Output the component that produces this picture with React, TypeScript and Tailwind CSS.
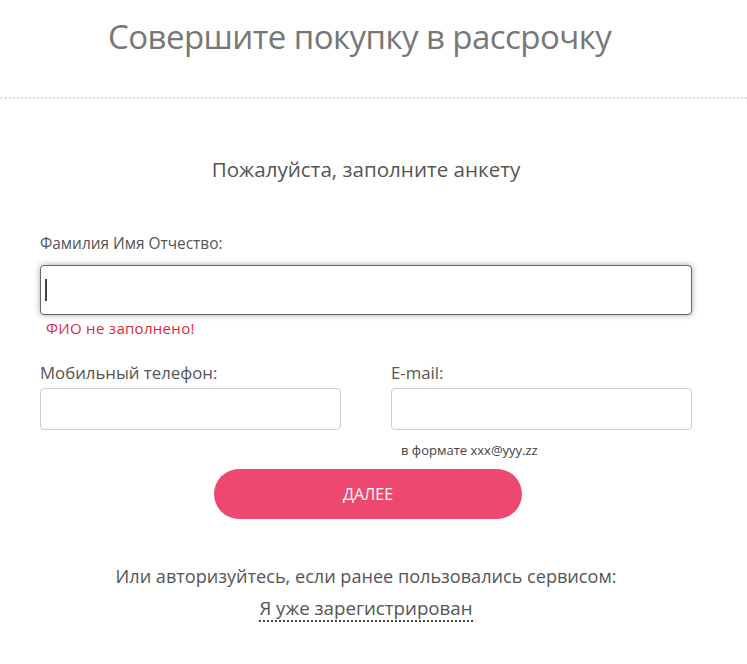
import React from "react";

export default function App() {
  return (
    <div className="min-h-[664px] w-[747px] bg-white font-['Open_Sans',sans-serif] text-[#555]">
      <div className="h-[97px] pt-[12px]">
        <h1 className="ml-[108px] text-[33px] leading-[50px] font-normal text-[#777] tracking-[-0.55px]">
          Совершите покупку в рассрочку
        </h1>
      </div>
      <div className="border-t-2 border-dotted border-[#ddd]" />
      <div className="ml-[40px] w-[652px]">
        <p className="mt-[56px] text-center text-[20.6px] leading-[28px] text-[#555]">Пожалуйста, заполните анкету</p>
        <label className="mt-[51px] block text-[15.4px] leading-[20px] text-[#555]">Фамилия Имя Отчество:</label>
        <div className="mt-[11px] h-[50px] rounded-[4px] border border-[#666] bg-white shadow-[0_0_6px_rgba(0,0,0,0.35)] flex items-center pl-[4px]">
          <div className="h-[22px] w-[2px] bg-[#444]" />
        </div>
        <p className="mt-[4px] ml-[6px] text-[15px] leading-[18px] tracking-[0.3px] text-[#e3283e]">ФИО не заполнено!</p>
        <div className="mt-[26px] flex gap-[50px]">
          <div className="w-[301px]">
            <label className="block text-[16.8px] leading-[20px] text-[#555]">Мобильный телефон:</label>
            <div className="mt-[5px] h-[42px] rounded-[4px] border border-[#ccc] bg-white" />
          </div>
          <div className="w-[301px]">
            <label className="block text-[16.8px] leading-[20px] text-[#555]">E-mail:</label>
            <div className="mt-[5px] h-[42px] rounded-[4px] border border-[#ccc] bg-white" />
            <p className="mt-[12px] ml-[10px] text-[13px] leading-[16px] text-[#444]">в формате xxx@yyy.zz</p>
          </div>
        </div>
        <div className="mt-[11px] flex justify-center">
          <button className="ml-[4px] h-[50px] w-[308px] rounded-full bg-[#ef4870] text-[16px] text-white">ДАЛЕЕ</button>
        </div>
        <p className="mt-[45px] text-center text-[18.1px] leading-[24px] text-[#555]">
          Или авторизуйтесь, если ранее пользовались сервисом:
        </p>
        <div className="mt-[8px] flex justify-center">
          <span className="text-[18.7px] leading-[24px] text-[#555] border-b-2 border-dotted border-[#444]">Я уже зарегистрирован</span>
        </div>
      </div>
    </div>
  );
}
